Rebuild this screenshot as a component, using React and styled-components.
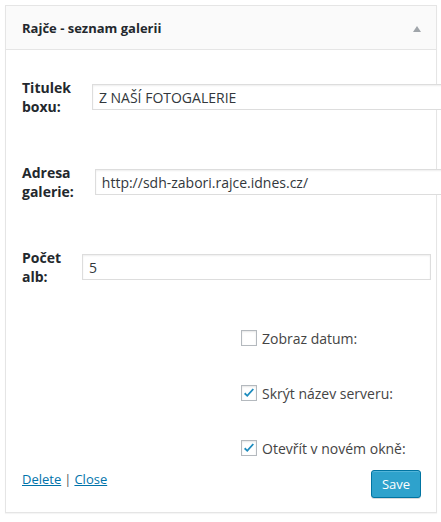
import React from "react";
import styled, { createGlobalStyle } from "styled-components";

const Global = createGlobalStyle`
  html, body { margin: 0; padding: 0; background: #fff; }
  body { font-family: "Open Sans", "Noto Sans", sans-serif; color: #444; }
  * { box-sizing: border-box; }
`;

const Panel = styled.div`
  margin: 5px;
  width: 432px;
  border: 1px solid #e5e5e5;
  background: #fff;
  box-shadow: 0 1px 1px rgba(0, 0, 0, 0.04);
`;

const Header = styled.div`
  height: 44px;
  background: #fafafa;
  border-bottom: 1px solid #e5e5e5;
  display: flex;
  align-items: center;
  justify-content: space-between;
  padding: 0 15px 0 16px;
`;

const Title = styled.h3`
  margin: 0;
  font-size: 13px;
  font-weight: 700;
  color: #23282d;
  line-height: 18px;
`;

const Arrow = styled.svg`
  width: 8px;
  height: 6px;
  display: block;
  margin-top: 2px;
`;

const Body = styled.div`
  padding: 28px 16px 14px 16px;
  display: flex;
  flex-direction: column;
`;

const Row = styled.div`
  display: flex;
  align-items: center;
  gap: 21px;
  margin-bottom: ${(p) => p.$mb}px;
`;

const Label = styled.label`
  width: min-content;
  font-size: 14px;
  font-weight: 700;
  line-height: 19px;
  color: #23282d;
  flex: none;
`;

const Input = styled.input`
  flex: none;
  width: ${(p) => p.$w}px;
  height: 26px;
  border: 1px solid #ddd;
  box-shadow: inset 0 1px 2px rgba(0, 0, 0, 0.07);
  background: #fff;
  padding: 0 6px;
  font-family: "Open Sans", "Noto Sans", sans-serif;
  font-size: 14px;
  color: #32373c;
  outline: none;
`;

const Checks = styled.div`
  display: flex;
  flex-direction: column;
  gap: 35px;
  padding-left: 219px;
  margin-top: 42px;
`;

const CheckRow = styled.label`
  display: flex;
  align-items: center;
  gap: 5px;
  height: 20px;
  font-size: 14px;
  color: #444;
  white-space: nowrap;
`;

const Box = styled.span`
  width: 16px;
  height: 16px;
  border: 1px solid #b4b9be;
  background: #fff;
  box-shadow: inset 0 1px 2px rgba(0, 0, 0, 0.1);
  display: flex;
  align-items: center;
  justify-content: center;
  flex: none;
`;

const Footer = styled.div`
  display: flex;
  justify-content: space-between;
  align-items: flex-start;
  margin-top: 12px;
`;

const Links = styled.div`
  font-size: 13px;
  line-height: 18px;
  color: #555;
`;

const Link = styled.a`
  color: #0073aa;
  text-decoration: underline;
  cursor: pointer;
`;

const Sep = styled.span`
  color: #555;
  margin: 0 3px;
`;

const SaveButton = styled.button`
  width: 50px;
  height: 28px;
  margin-right: -1px;
  background: #2ea2cc;
  border: 1px solid #0074a2;
  border-radius: 3px;
  box-shadow: inset 0 1px 0 rgba(120, 200, 230, 0.5), 0 1px 0 rgba(0, 0, 0, 0.15);
  color: #fff;
  font-family: "Open Sans", "Noto Sans", sans-serif;
  font-size: 13px;
  padding: 0;
  line-height: 26px;
`;

function Check({ checked, children }) {
  return (
    <CheckRow>
      <Box>
        {checked && (
          <svg width="12" height="11" viewBox="0 0 12 11">
            <path d="M1 6 L4.3 9 L11 1.5 L9.6 0.6 L4.2 6.6 L2.3 4.6 Z" fill="#1e8cbe" />
          </svg>
        )}
      </Box>
      {children}
    </CheckRow>
  );
}

export default function App() {
  return (
    <>
      <Global />
      <Panel>
        <Header>
          <Title>Rajče - seznam galerii</Title>
          <Arrow viewBox="0 0 8 6">
            <path d="M4 0 L8 6 L0 6 Z" fill="#a0a5aa" />
          </Arrow>
        </Header>
        <Body>
          <Row $mb={47}>
            <Label>Titulek boxu:</Label>
            <Input $w={352} defaultValue="Z NAŠÍ FOTOGALERIE" />
          </Row>
          <Row $mb={47}>
            <Label>Adresa galerie:</Label>
            <Input $w={350} defaultValue="http://sdh-zabori.rajce.idnes.cz/" />
          </Row>
          <Row $mb={0}>
            <Label>Počet alb:</Label>
            <Input $w={349} defaultValue="5" />
          </Row>
          <Checks>
            <Check>Zobraz datum:</Check>
            <Check checked>Skrýt název serveru:</Check>
            <Check checked>Otevřít v novém okně:</Check>
          </Checks>
          <Footer>
            <Links>
              <Link>Delete</Link>
              <Sep>|</Sep>
              <Link>Close</Link>
            </Links>
            <SaveButton>Save</SaveButton>
          </Footer>
        </Body>
      </Panel>
    </>
  );
}
